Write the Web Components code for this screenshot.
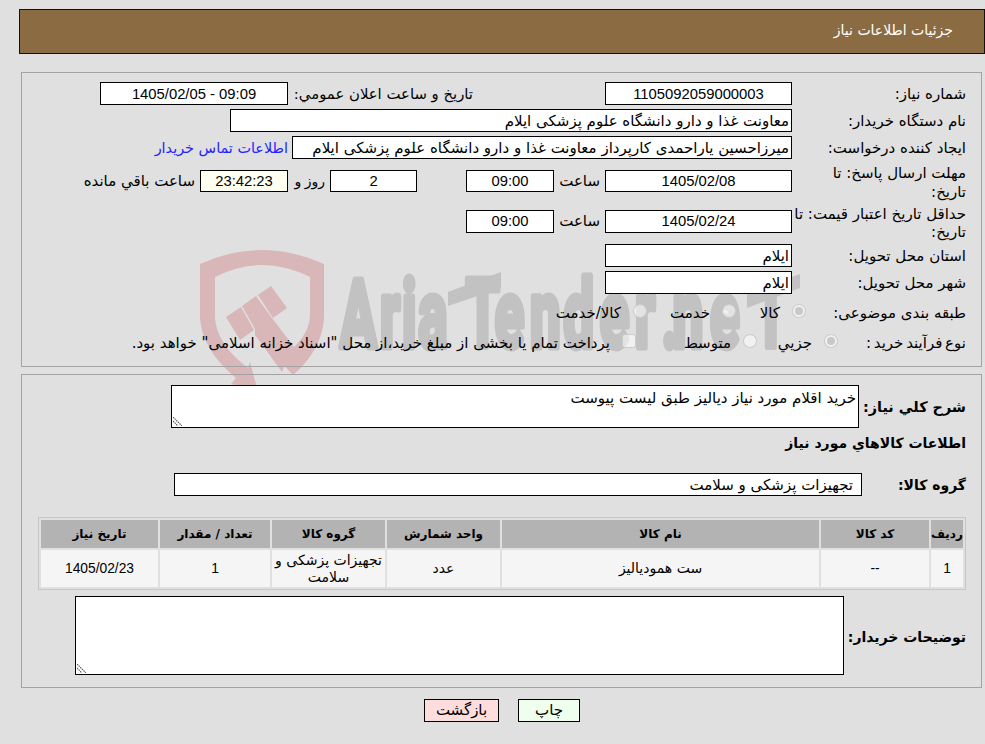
<!DOCTYPE html>
<html dir="rtl" lang="fa">
<head>
<meta charset="utf-8">
<style>
html,body{margin:0;padding:0;background:#e0e0e0;overflow:hidden}
body{font:15px/18.5px "DejaVu Sans",sans-serif;color:#000}
</style>
</head>
<body>
<x-page>
  <x-header>جزئیات اطلاعات نیاز</x-header>
  <x-panel style="height:295px;padding-top:9px">
    <x-row style="height:23px">
      <x-label style="width:174px">شماره نیاز:</x-label>
      <x-field num style="width:187px">1105092059000003</x-field>
      <x-label style="width:180px;margin-right:132px;white-space:nowrap;font-size:14.85px">تاريخ و ساعت اعلان عمومي:</x-label>
      <x-field num style="width:188px;margin-right:5px">09:09 - 1405/02/05</x-field>
    </x-row>
    <x-row style="height:23px;margin-top:4px">
      <x-label style="width:174px">نام دستگاه خریدار:</x-label>
      <x-field align="start" style="width:562px">معاونت غذا و دارو دانشگاه علوم پزشکی ایلام</x-field>
    </x-row>
    <x-row style="height:23px;margin-top:4px">
      <x-label style="width:174px">ایجاد کننده درخواست:</x-label>
      <x-field align="start" style="width:500px">میرزاحسین یاراحمدی کارپرداز معاونت غذا و دارو دانشگاه علوم پزشکی ایلام</x-field>
      <x-label style="margin-right:4px;color:#2323ff;font-size:14.4px">اطلاعات تماس خریدار</x-label>
    </x-row>
    <x-row style="height:36px;margin-top:4px">
      <x-label style="width:174px;padding-left:20px;padding-top:3px">مهلت ارسال پاسخ: تا تاریخ:</x-label>
      <x-field num style="width:187px;height:22px">1405/02/08</x-field>
      <x-label style="width:42px;margin-right:5px">ساعت</x-label>
      <x-field num style="width:88px;height:22px;margin-right:4px">09:00</x-field>
      <x-field num style="width:87px;height:22px;margin-right:49px">2</x-field>
      <x-label style="width:28px;margin-right:5px;white-space:nowrap;font-size:14px;word-spacing:-1px">روز و</x-label>
      <x-field num style="width:88px;height:22px;margin-right:9px;--bg:#fffff0">23:42:23</x-field>
      <x-label style="margin-right:5px">ساعت باقي مانده</x-label>
    </x-row>
    <x-row style="height:36px;margin-top:4px">
      <x-label style="width:174px;padding-top:4px">حداقل تاریخ اعتبار قیمت: تا تاریخ:</x-label>
      <x-field num style="width:187px;height:23px">1405/02/24</x-field>
      <x-label style="width:42px;margin-right:5px">ساعت</x-label>
      <x-field num style="width:88px;height:23px;margin-right:4px">09:00</x-field>
    </x-row>
    <x-row style="height:23px;margin-top:5px">
      <x-label style="width:174px">استان محل تحویل:</x-label>
      <x-field align="start" style="width:187px">ایلام</x-field>
    </x-row>
    <x-row style="height:23px;margin-top:4px">
      <x-label style="width:174px">شهر محل تحویل:</x-label>
      <x-field align="start" style="width:187px">ایلام</x-field>
    </x-row>
    <x-row style="height:30px;margin-top:4px">
      <x-label style="width:160px">طبقه بندی موضوعی:</x-label>
      <x-option checked style="width:70px">کالا</x-option>
      <x-option style="width:89px">خدمت</x-option>
      <x-option>کالا/خدمت</x-option>
    </x-row>
    <x-row style="height:30px">
      <x-label style="width:128px;word-spacing:-2px">نوع فرآیند خرید :</x-label>
      <x-option checked style="width:81px">جزيي</x-option>
      <x-option style="width:121px">متوسط</x-option>
      <x-option square>پرداخت تمام یا بخشی از مبلغ خرید،از محل "اسناد خزانه اسلامی" خواهد بود.</x-option>
    </x-row>
  </x-panel>
  <x-panel style="height:314px;margin-top:7px;padding-top:10px">
    <x-row style="height:43px">
      <x-label strong style="width:107px;font-size:14.4px">شرح كلي نياز:</x-label>
      <x-note style="width:688px;height:43px">خرید اقلام مورد نیاز دیالیز طبق لیست پیوست</x-note>
    </x-row>
    <x-row style="height:20px;margin-top:5px">
      <x-label strong>اطلاعات كالاهاي مورد نياز</x-label>
    </x-row>
    <x-row style="height:23px;margin-top:20px">
      <x-label strong style="width:104px">گروه کالا:</x-label>
      <x-field align="start" style="width:688px;--pad:8px">تجهیزات پزشکی و سلامت</x-field>
    </x-row>
    <x-table style="margin-top:21px"></x-table>
    <x-row style="height:79px;margin-top:6px">
      <x-label strong style="width:122px;padding-top:3px">توضیحات خریدار:</x-label>
      <x-note style="width:769px;height:79px"></x-note>
    </x-row>
  </x-panel>
  <x-actions>
    <x-btn style="width:62px;--bg:#eeffee">چاپ</x-btn>
    <x-btn style="width:75px;--bg:#ffdddd">بازگشت</x-btn>
  </x-actions>
</x-page>
<script>
function def(name, css, html){
  customElements.define(name, class extends HTMLElement{
    constructor(){
      super();
      const s=this.attachShadow({mode:'open'});
      s.innerHTML='<style>'+css+'</style>'+html;
    }
  });
}
def('x-page',`
  :host{display:block;position:relative;width:985px;height:744px;box-sizing:border-box;padding-top:9px;overflow:hidden}
  svg{position:absolute;left:0;top:0;width:985px;height:744px}
  .content{position:relative}
`,`
<svg viewBox="0 0 985 744" aria-hidden="true">
  <path fill="#d9b6b8" d="M200 264Q262 236 324 264L324 318Q322 350 293 375L255 335 272 318 294 347Q310 332 310 314L310 277Q262 253 215 277L215 318Q217 345 248 368L250 362 257 388 231 384 236 378Q202 350 200 318Z"/>
  <path fill="#d9b6b8" d="M226 317L241 307 254 330 240 340Z M242 306L256 296 272 318 290 350 282 372 255 335 255 329Z M258 295L271 286 287 308 273 318Z"/>
  <g fill="#c2c2c2">
    <text transform="scale(.58 1)" y="347" x="586 655 693 721 803 853 914 971 1034 1095 1141 1160 1224 1300" font-family="Roboto,'DejaVu Sans',sans-serif" font-weight="700" font-size="94" stroke="#c2c2c2" stroke-width="7" stroke-linejoin="round" style="direction:ltr;unicode-bidi:bidi-override">AriaTender.neT</text>
    <path d="M448 292L501 272 501 288 448 306Z M747 294L800 274 800 288 747 308Z"/>
  </g>
</svg>
<div class="content"><slot></slot></div>`);
def('x-header',`
  :host{display:flex;align-items:center;box-sizing:border-box;height:45px;margin-left:19px;padding-right:31px;padding-bottom:2px;background:#8b6b42;border:1px solid #111;color:#fff;font-size:14px}
`,`<slot></slot>`);
def('x-panel',`
  :host{display:block;box-sizing:border-box;margin:18px 3px 0 21px;padding-right:15px;border:1px solid #a3a3a3}
`,`<slot></slot>`);
def('x-row',`:host{display:flex;align-items:center}`,`<slot></slot>`);
def('x-label',`
  :host{display:block;flex:none;box-sizing:border-box;padding-top:1px}
  :host([strong]){font-weight:700;font-size:14px}
`,`<slot></slot>`);
def('x-field',`
  :host{display:flex;flex:none;align-items:center;justify-content:center;box-sizing:border-box;height:23px;border:1px solid #000;background:var(--bg,#fff);padding:1px var(--pad,2px) 0;white-space:nowrap;overflow:hidden}
  :host([align=start]){justify-content:flex-start}
  :host([num]){font-family:"Liberation Sans",sans-serif;font-size:14.8px}
`,`<slot></slot>`);
def('x-option',`
  :host{display:flex;flex:none;align-items:center;gap:12px;box-sizing:border-box;white-space:nowrap}
  i{flex:none;box-sizing:border-box;display:block;width:14px;height:14px;margin-top:-4px;border-radius:50%;background:rgba(255,255,255,.55);border:1.5px solid rgba(200,200,200,.9);position:relative}
  :host([square]) i{border-radius:3px}
  :host([checked]) i::after{content:"";position:absolute;inset:2px;border-radius:50%;background:#c8c8c8}
  span{padding-top:1px}
`,`<i></i><span><slot></slot></span>`);
def('x-note',`
  :host{display:block;position:relative;flex:none;box-sizing:border-box;border:1px solid #000;background:#fff;padding:3px 2px;overflow:hidden}
  svg{position:absolute;left:1px;bottom:1px;width:9px;height:9px}
`,`<slot></slot><svg viewBox="0 0 9 9" aria-hidden="true"><path d="M0 0L9 9M0 4L5 9" fill="none" stroke="#555" stroke-width="1.1" stroke-dasharray="1.5 .8"/></svg>`);
def('x-table',`
  :host{display:block;width:928px;font-size:14px}
  table{width:928px;table-layout:fixed;border-collapse:separate;border-spacing:2px;border:1px solid #c6c6c6;box-sizing:border-box}
  th,td{padding:0;text-align:center;vertical-align:middle;overflow:hidden}
  th{height:28px;background:#b3b3b3;font-size:12px;font-weight:700}
  td{height:37px;background:#f5f5f5;line-height:17px}
  .n{font-family:"Liberation Sans",sans-serif;font-size:13.8px}
`,`
<table>
<colgroup><col style="width:32px"><col style="width:108px"><col style="width:317px"><col style="width:113px"><col style="width:113px"><col style="width:110px"><col style="width:117px"></colgroup>
<tr><th>ردیف</th><th>کد کالا</th><th>نام کالا</th><th>واحد شمارش</th><th>گروه کالا</th><th>تعداد / مقدار</th><th>تاریخ نیاز</th></tr>
<tr><td class="n">1</td><td class="n">--</td><td>ست همودیالیز</td><td>عدد</td><td>تجهیزات پزشکی و سلامت</td><td class="n">1</td><td class="n">1405/02/23</td></tr>
</table>`);
def('x-actions',`:host{display:flex;justify-content:center;gap:19px;margin-top:11px;padding-left:19px}`,`<slot></slot>`);
def('x-btn',`
  :host{display:flex;align-items:center;justify-content:center;box-sizing:border-box;height:23px;border:1px solid #000;background:var(--bg)}
`,`<slot></slot>`);
</script>
</body>
</html>
